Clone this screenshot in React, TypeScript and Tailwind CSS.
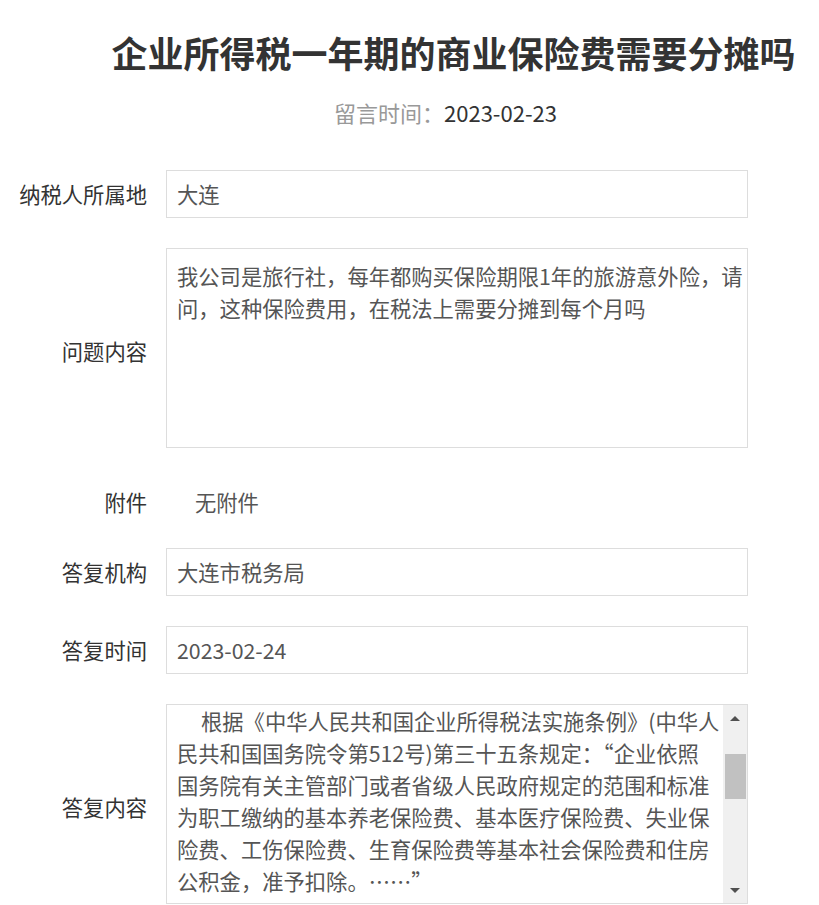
import React from "react";

const font = "font-['Noto_Sans_CJK_SC','Noto_Sans',sans-serif]";

function Label({ children, extra = "" }: { children: React.ReactNode; extra?: string }) {
  return (
    <div className={`w-[147px] shrink-0 text-right text-[21.3px] leading-[30px] text-[#333] ${extra}`}>
      {children}
    </div>
  );
}

function InputRow({ label, value, className = "" }: { label: string; value: string; className?: string }) {
  return (
    <div className={`flex items-center ${className}`}>
      <Label>{label}</Label>
      <div className="ml-[19px] flex h-[48px] w-[582px] items-center border border-[#ddd] px-[10px] text-[21.3px] text-[#555]">
        {value}
      </div>
    </div>
  );
}

const replyLines = [
  "根据《中华人民共和国企业所得税法实施条例》(中华人",
  "民共和国国务院令第512号)第三十五条规定：“企业依照",
  "国务院有关主管部门或者省级人民政府规定的范围和标准",
  "为职工缴纳的基本养老保险费、基本医疗保险费、失业保",
  "险费、工伤保险费、生育保险费等基本社会保险费和住房",
  "公积金，准予扣除。……”",
  "又根据《中华人民共和国企业所得税法实施条例》(中华人",
  "民共和国国务院令第512号)第三十六条规定：“除企业依",
];

export default function App() {
  return (
    <div className={`min-h-screen bg-white ${font}`}>
      <h1 className="pl-[88px] pt-[30px] text-center text-[36px] font-bold leading-[44px] text-[#333]">
        企业所得税一年期的商业保险费需要分摊吗
      </h1>
      <div className="mt-[23px] pl-[72px] text-center text-[22px] leading-[30px]">
        <span className="text-[#999]">留言时间：</span>
        <span className="text-[#333]">2023-02-23</span>
      </div>

      <div className="mt-[43px] flex flex-col pb-[40px]">
        <InputRow label="纳税人所属地" value="大连" />

        <div className="mt-[30px] flex items-center">
          <Label extra="pt-[6px]">问题内容</Label>
          <div className="ml-[19px] h-[200px] w-[582px] border border-[#ddd] px-[10px] pt-[11px] text-[21.3px] leading-[32px] text-[#555]">
            <div className="whitespace-nowrap">我公司是旅行社，每年都购买保险期限1年的旅游意外险，请</div>
            <div className="whitespace-nowrap">问，这种保险费用，在税法上需要分摊到每个月吗</div>
          </div>
        </div>

        <div className="mt-[30px] flex h-[48px] items-center">
          <Label>附件</Label>
          <div className="ml-[48px] text-[21.3px] leading-[30px] text-[#555]">无附件</div>
        </div>

        <InputRow label="答复机构" value="大连市税务局" className="mt-[22px]" />
        <InputRow label="答复时间" value="2023-02-24" className="mt-[30px]" />

        <div className="mt-[30px] flex items-center">
          <Label extra="pt-[6px]">答复内容</Label>
          <div className="ml-[19px] flex h-[200px] w-[582px] border border-[#ddd]">
            <div className="flex-1 overflow-hidden pl-[10px] text-[21.3px] leading-[32px] text-[#555]">
              {replyLines.map((l, i) => (
                <div key={i} className={`whitespace-nowrap ${i === 0 || i === 6 ? "pl-[24px]" : ""}`}>
                  {l}
                </div>
              ))}
            </div>
            <div className="flex w-[24px] shrink-0 flex-col items-center bg-[#f0f0f0]">
              <div className="mt-[11px] h-0 w-0 border-x-[5px] border-b-[5px] border-x-transparent border-b-[#505050]" />
              <div className="mt-[33px] ml-[1px] h-[45px] w-[21px] bg-[#c1c1c1]" />
              <div className="flex-1" />
              <div className="mb-[10px] h-0 w-0 border-x-[5px] border-t-[5px] border-x-transparent border-t-[#505050]" />
            </div>
          </div>
        </div>
      </div>
    </div>
  );
}
